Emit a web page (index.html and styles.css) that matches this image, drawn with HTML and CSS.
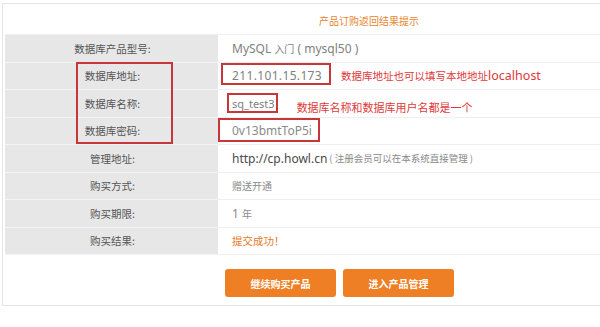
FILE: index.html
```html
<!DOCTYPE html>
<html lang="zh-CN">
<head>
<meta charset="utf-8">
<title>产品订购返回结果提示</title>
<link rel="stylesheet" href="styles.css">
</head>
<body>
<div class="panel">
  <div class="header"><span class="title">产品订购返回结果提示</span></div>
  <div class="table">
    <div class="row"><div class="label">数据库产品型号:</div><div class="value"><span class="v-gray">MySQL <span class="cn">入门</span> ( mysql50 )</span></div></div>
    <div class="row"><div class="label">数据库地址:</div><div class="value"><span class="v-gray ip">211.101.15.173</span><span class="note note-1">数据库地址也可以填写本地地址<span class="latin">localhost</span></span></div></div>
    <div class="row"><div class="label">数据库名称:</div><div class="value"><span class="v-gray small">sq_test3</span><span class="note note-2">数据库名称和数据库用户名都是一个</span></div></div>
    <div class="row"><div class="label">数据库密码:</div><div class="value"><span class="v-light">0v13bmtToP5i</span></div></div>
    <div class="row"><div class="label">管理地址:</div><div class="value"><span class="v-dark">http://cp.howl.cn</span><span class="hint">( 注册会员可以在本系统直接管理 )</span></div></div>
    <div class="row"><div class="label">购买方式:</div><div class="value"><span class="cn v-light">赠送开通</span></div></div>
    <div class="row"><div class="label">购买期限:</div><div class="value"><span class="v-light">1 <span class="cn">年</span></span></div></div>
    <div class="row"><div class="label">购买结果:</div><div class="value"><span class="cn ok">提交成功！</span></div></div>

    <div class="mark mark-labels"></div>
    <div class="mark mark-ip"></div>
    <div class="mark mark-name"></div>
    <div class="mark mark-pwd"></div>
  </div>
  <div class="actions">
    <button class="btn" type="button">继续购买产品</button>
    <button class="btn" type="button">进入产品管理</button>
  </div>
</div>
</body>
</html>
```
FILE: styles.css
```css
html, body {
  margin: 0;
  padding: 0;
  background: #ffffff;
  overflow: hidden;
}
body {
  font-family: "Noto Sans", "Noto Sans CJK SC", sans-serif;
  color: #555;
}
.panel {
  margin: 3px 0 0 2px;
  border: 1px solid #e4e4e4;
  border-right: none;
  box-shadow: 0 2px 0 #f3f3f3;
  padding: 0 0 8px 2px;
}
.header {
  height: 30px;
  display: flex;
  align-items: center;
  padding: 2px 0 0 314px;
  box-sizing: border-box;
}
.title {
  font-family: "Noto Sans CJK SC", sans-serif;
  font-size: 10px;
  color: #e8862e;
}
.table {
  position: relative;
  border-top: 1px solid #f0f0f0;
}
.row {
  display: grid;
  grid-template-columns: 213px 1fr;
  height: 27.5px;
}
.label {
  background: #e7e7e7;
  border-bottom: 1px solid #f4f4f4;
  display: flex;
  align-items: center;
  justify-content: center;
  font-family: "Noto Sans CJK SC", sans-serif;
  font-size: 10.5px;
  color: #555;
  padding-left: 2px;
}
.value {
  border-bottom: 1px solid #efefef;
  display: flex;
  align-items: center;
  padding-left: 14px;
  font-size: 12px;
  white-space: nowrap;
}
.cn {
  font-family: "Noto Sans CJK SC", sans-serif;
  font-size: 10px;
}
.v-gray { color: #808080; }
.v-light { color: #8a8a8a; }
.v-dark { color: #4a4a4a; }
.ip { letter-spacing: 0.35px; }
.small { font-size: 11px; }
.ok { color: #e8782a; font-size: 10.5px; }
.hint {
  font-family: "Noto Sans CJK SC", sans-serif;
  font-size: 9.5px;
  color: #888;
  margin-left: 2px;
}
.note {
  font-family: "Noto Sans CJK SC", sans-serif;
  font-size: 10.5px;
  color: #e0393b;
}
.note .latin {
  font-family: "Noto Sans", sans-serif;
  font-size: 12.5px;
}
.note-1 { margin-left: 19px; }
.note-2 { margin-left: 22px; margin-top: 8px; font-size: 11px; }
.mark {
  position: absolute;
  border: 2px solid #c9363a;
  box-sizing: border-box;
  pointer-events: none;
}
.mark-labels { left: 71px; top: 27px; width: 97px; height: 82px; }
.mark-ip { left: 216px; top: 28px; width: 110px; height: 22px; }
.mark-name { left: 222px; top: 58px; width: 51px; height: 20px; }
.mark-pwd { left: 213px; top: 83px; width: 102px; height: 24px; }
.actions {
  display: flex;
  gap: 7px;
  margin: 14px 0 0 220px;
}
.btn {
  width: 111px;
  height: 28px;
  border: none;
  border-radius: 3px;
  background: #ef7f25;
  color: #fff;
  font-family: "Noto Sans CJK SC", sans-serif;
  font-size: 10px;
  font-weight: bold;
  padding: 0;
}
```
